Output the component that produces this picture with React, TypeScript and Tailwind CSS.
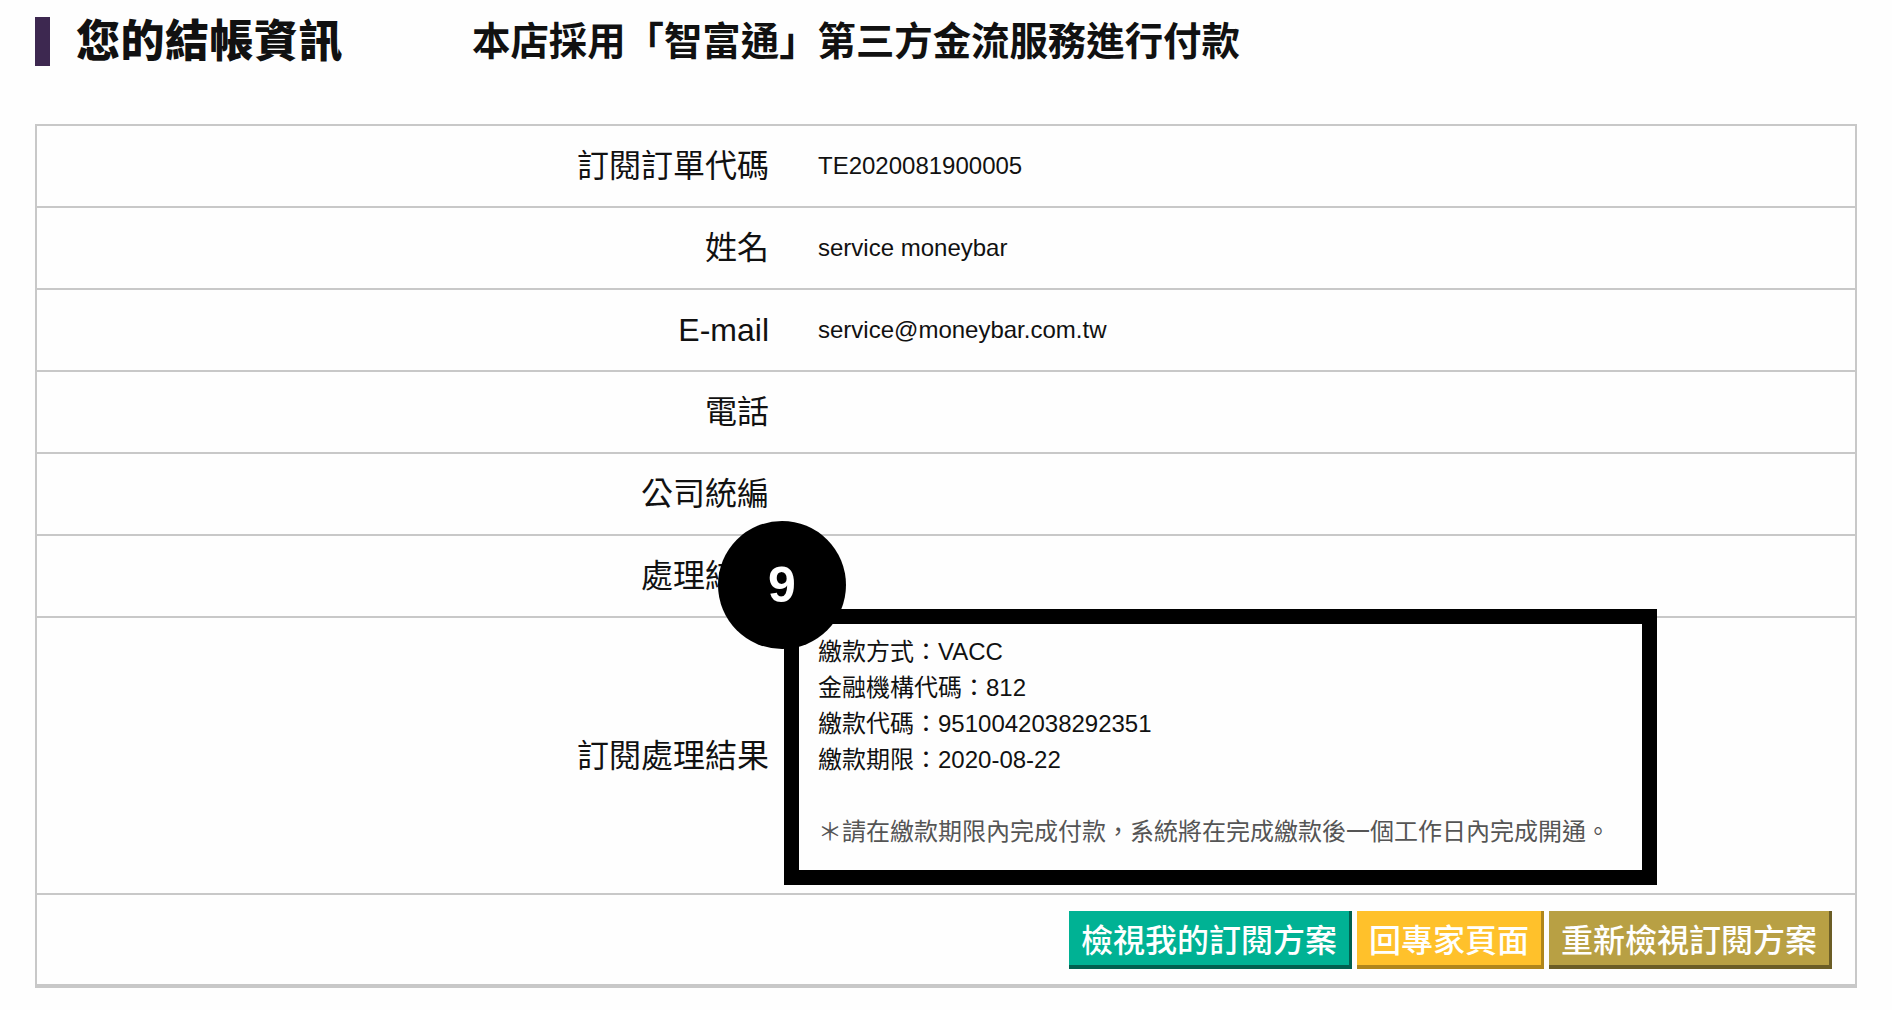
import React from 'react'

const FONT = '"Liberation Sans", "Noto Sans CJK TC", sans-serif'

const ROWS: { label: string; value?: string }[] = [
  { label: '訂閱訂單代碼', value: 'TE2020081900005' },
  { label: '姓名', value: 'service moneybar' },
  { label: 'E-mail', value: 'service@moneybar.com.tw' },
  { label: '電話' },
  { label: '公司統編' },
  { label: '處理結果' },
]

const RESULT_LINES = [
  '繳款方式：VACC',
  '金融機構代碼：812',
  '繳款代碼：9510042038292351',
  '繳款期限：2020-08-22',
]

export default function App() {
  return (
    <div className="w-[1892px] h-[1010px] bg-[#fefefe] text-[#111]" style={{ fontFamily: FONT }}>
      {/* Header */}
      <div className="h-[124px] pl-[35px] pt-[17px] flex items-start">
        <div className="flex items-center">
          <div className="w-[15px] h-[49px] bg-[#3d2850]" />
          <h1 className="ml-[26px] text-[44px] leading-[49px] font-black tracking-[0.5px]">您的結帳資訊</h1>
          <p className="ml-[129px] text-[38.4px] leading-[49px] font-bold">本店採用「智富通」第三方金流服務進行付款</p>
        </div>
      </div>

      {/* Table */}
      <div className="mx-[35px] w-[1822px] border-2 border-b-4 border-[#c8c8c8]">
        {ROWS.map(row => (
          <div key={row.label} className="flex h-[82px] border-b-2 border-[#c8c8c8]">
            <div className="w-[757px] shrink-0 flex items-center justify-end pr-[25px] text-[32px]">
              {row.label}
            </div>
            <div className="flex-1 flex items-center pl-[24px] text-[24px]">{row.value}</div>
          </div>
        ))}

        {/* Result row */}
        <div className="relative flex h-[277px] border-b-2 border-[#c8c8c8]">
          <div className="w-[757px] shrink-0 flex items-center justify-end pr-[25px] text-[32px]">
            訂閱處理結果
          </div>
          <div className="flex-1 pl-[24px] pt-[16px] text-[24px] leading-[36px]">
            {RESULT_LINES.map(line => (
              <div key={line}>{line}</div>
            ))}
            <div className="h-[36px]" />
            <div className="text-[#555]">＊請在繳款期限內完成付款，系統將在完成繳款後一個工作日內完成開通。</div>
          </div>

          {/* Annotation overlay */}
          <div className="absolute left-[747px] top-[-9px] w-[873px] h-[276px] border-[15px] border-black" />
          <div className="absolute left-[681px] top-[-97px] w-[128px] h-[128px] rounded-full bg-black flex items-center justify-center">
            <span className="text-white text-[50px] font-bold leading-none" style={{ fontFamily: '"Liberation Sans", sans-serif' }}>9</span>
          </div>
        </div>

        {/* Buttons */}
        <div className="h-[89px] flex items-center justify-end gap-[5px] pr-[23px]" style={{ fontFamily: '"Noto Sans CJK TC", sans-serif' }}>
          <button className="h-[58px] px-[12px] bg-[#00b294] border-r-[3px] border-b-[4px] border-[#00604f] text-white text-[32px] leading-none font-medium">
            檢視我的訂閱方案
          </button>
          <button className="h-[58px] px-[12px] bg-[#ffc12b] border-r-[3px] border-b-[4px] border-[#b0861b] text-white text-[32px] leading-none font-medium">
            回專家頁面
          </button>
          <button className="h-[58px] px-[12px] bg-[#b8a044] border-r-[3px] border-b-[4px] border-[#6b5d26] text-white text-[32px] leading-none font-medium">
            重新檢視訂閱方案
          </button>
        </div>
      </div>
    </div>
  )
}
